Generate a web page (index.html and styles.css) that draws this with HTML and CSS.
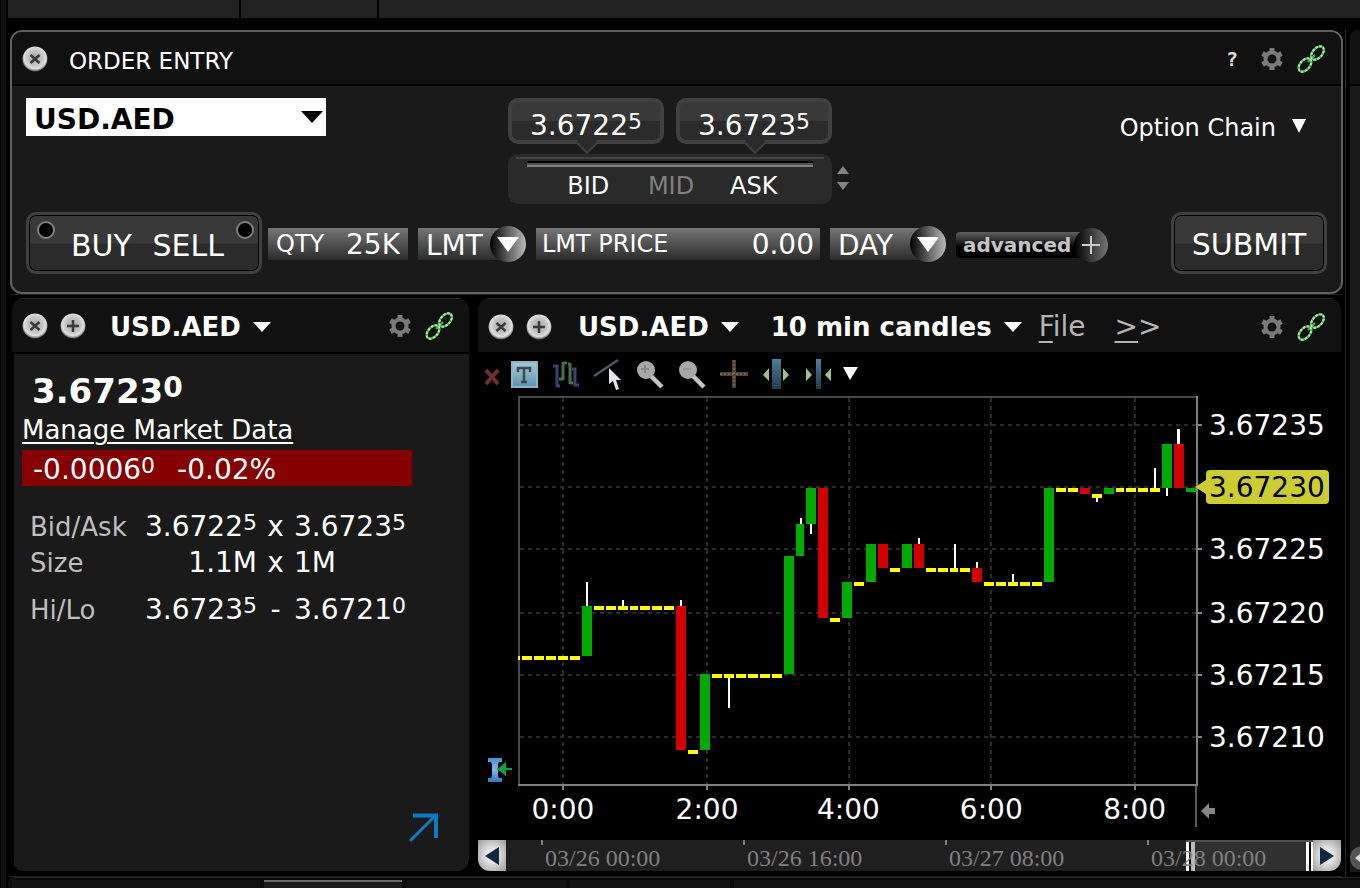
FILE: index.html
```html
<!DOCTYPE html>
<html lang="en">
<head>
<meta charset="utf-8">
<title>Order Entry - USD.AED</title>
<link rel="stylesheet" href="styles.css">
</head>
<body>
<svg class="defs" aria-hidden="true">
  <defs>
    <radialGradient id="knob" cx="50%" cy="45%" r="55%">
      <stop offset="0" stop-color="#a8a8a8"/><stop offset=".55" stop-color="#c4c4c4"/><stop offset=".8" stop-color="#e0e0e0"/><stop offset="1" stop-color="#505050"/>
    </radialGradient>
    <linearGradient id="tile" x1="0" y1="0" x2="0" y2="1"><stop offset="0" stop-color="#a9c9d6"/><stop offset="1" stop-color="#5c93ae"/></linearGradient>
    <linearGradient id="pipe" x1="0" y1="0" x2="0" y2="1"><stop offset="0" stop-color="#4d7f9c"/><stop offset="1" stop-color="#233a4a"/></linearGradient>
    <linearGradient id="beam" x1="0" y1="0" x2="0" y2="1"><stop offset="0" stop-color="#4a90d0"/><stop offset=".5" stop-color="#7db8ee"/><stop offset="1" stop-color="#2f78b8"/></linearGradient>
    <symbol id="i-close" viewBox="0 0 26 26"><circle cx="13" cy="13" r="12.5" fill="url(#knob)"/><path d="M8.500 9l9 8M17.500 9l-9 8" stroke="#3a3a3a" stroke-width="2.500"/></symbol>
    <symbol id="i-add" viewBox="0 0 26 26"><circle cx="13" cy="13" r="12.5" fill="url(#knob)"/><path d="M13 7v12M7 13h12" stroke="#3a3a3a" stroke-width="2.500"/></symbol>
    <symbol id="i-gear" viewBox="0 0 22 22"><g stroke="#7a7a7a"><path d="M11 0v22M1.500 5.500l19 11M20.500 5.500l-19 11" stroke-width="5"/></g><circle cx="11" cy="11" r="8.500" fill="#7a7a7a"/><circle cx="11" cy="11" r="4.500" fill="#111"/></symbol>
    <symbol id="i-link" viewBox="0 0 28 28"><g fill="none" stroke="#4fa457" stroke-width="2.400"><ellipse cx="20.500" cy="8" rx="7.800" ry="4.800" transform="rotate(-48 20.500 8)"/><ellipse cx="8" cy="20" rx="7.800" ry="4.800" transform="rotate(-48 8 20)"/><path d="M11 17l7-7"/></g><g fill="none" stroke="#a4f0a0" stroke-width="2" stroke-dasharray="2.500 1.500"><ellipse cx="20.500" cy="8" rx="7.800" ry="4.800" transform="rotate(-48 20.500 8)"/><ellipse cx="8" cy="20" rx="7.800" ry="4.800" transform="rotate(-48 8 20)"/></g></symbol>
    <symbol id="i-down" viewBox="0 0 20 10" preserveAspectRatio="none"><path d="M0 0h20L10 10z" fill="currentColor"/></symbol>
  </defs>
</svg>

<div class="app">
  <div class="rail"></div>
  <div class="main">
    <div class="topbar"><span></span><span></span><span></span></div>

    <div class="workspace">
      <div class="board">
        <section class="panel order">
          <header class="bar">
            <button class="icon" aria-label="Close"><svg width="26" height="26"><use href="#i-close"/></svg></button>
            <h1 class="order-title">ORDER ENTRY</h1>
            <span class="tools">
              <button class="icon help" aria-label="Help">?</button>
              <button class="icon" aria-label="Settings"><svg width="22" height="22"><use href="#i-gear"/></svg></button>
              <button class="icon" aria-label="Link"><svg width="28" height="28"><use href="#i-link"/></svg></button>
            </span>
          </header>
          <form class="order-body">
            <div class="quote-row">
              <div class="symbol">
                <select aria-label="Symbol"><option>USD.AED</option></select>
                <svg width="22" height="12"><use href="#i-down" width="22" height="12"/></svg>
              </div>
              <div class="quotes">
                <div class="prices">
                  <button type="button" class="price">3.6722<span class="pip">5</span></button>
                  <button type="button" class="price">3.6723<span class="pip">5</span></button>
                </div>
                <div class="sides">
                  <button type="button">BID</button>
                  <button type="button" class="dim">MID</button>
                  <button type="button">ASK</button>
                </div>
              </div>
              <div class="spin">
                <button type="button" aria-label="Up"><svg width="12" height="8"><path d="M6 0l6 8H0z" fill="#858585"/></svg></button>
                <button type="button" aria-label="Down"><svg width="12" height="8"><path d="M6 8l6-8H0z" fill="#858585"/></svg></button>
              </div>
              <button type="button" class="chain">Option Chain <svg width="14" height="14"><path d="M0 0h14L7 14z" fill="#fff"/></svg></button>
            </div>

            <div class="entry-row">
              <div class="side-switch">
                <label><input type="radio" name="side"><span>BUY</span></label>
                <label><span>SELL</span><input type="radio" name="side"></label>
              </div>
              <label class="field qty"><span>QTY</span><input type="text" value="25K"></label>
              <div class="field pick type"><select aria-label="Order type"><option>LMT</option></select><span class="ball"><svg width="22" height="15"><path d="M0 0h22L11 15z" fill="#fff"/></svg></span></div>
              <label class="field limit"><span>LMT PRICE</span><input type="text" value="0.00"></label>
              <div class="field pick tif"><select aria-label="Time in force"><option>DAY</option></select><span class="ball"><svg width="22" height="15"><path d="M0 0h22L11 15z" fill="#fff"/></svg></span></div>
              <button type="button" class="advanced"><span class="adv-text">advanced</span><span class="adv-ball"><svg width="18" height="18"><path d="M9 0v18M0 9h18" stroke="#ccc" stroke-width="2"/></svg></span></button>
              <button type="button" class="submit">SUBMIT</button>
            </div>
          </form>
        </section>

        <div class="lower">
          <section class="panel detail">
            <header class="bar">
              <button class="icon" aria-label="Close"><svg width="26" height="26"><use href="#i-close"/></svg></button>
              <button class="icon" aria-label="Add"><svg width="26" height="26"><use href="#i-add"/></svg></button>
              <button class="menu first">USD.AED <svg width="18" height="10"><use href="#i-down"/></svg></button>
              <span class="tools">
                <button class="icon" aria-label="Settings"><svg width="22" height="22"><use href="#i-gear"/></svg></button>
                <button class="icon" aria-label="Link"><svg width="28" height="28"><use href="#i-link"/></svg></button>
              </span>
            </header>
            <div class="detail-body">
              <p class="last">3.6723<span class="pip">0</span></p>
              <a class="manage" href="#">Manage Market Data</a>
              <p class="change"><span>-0.0006<span class="pip">0</span></span><span>-0.02%</span></p>
              <table class="stats">
                <tr><th>Bid/Ask</th><td>3.6722<span class="pip">5</span></td><td>x</td><td>3.6723<span class="pip">5</span></td></tr>
                <tr><th>Size</th><td>1.1M</td><td>x</td><td>1M</td></tr>
                <tr class="range"><th>Hi/Lo</th><td>3.6723<span class="pip">5</span></td><td>-</td><td>3.6721<span class="pip">0</span></td></tr>
              </table>
              <a class="expand" href="#" aria-label="Open details"><svg width="30" height="30" fill="none" stroke="#0a7cc4" stroke-width="3"><path d="M1 28L26 3"/><path d="M4 2.500h23V25" stroke-width="4"/></svg></a>
            </div>
          </section>

          <section class="panel chart">
            <header class="bar">
              <button class="icon" aria-label="Close"><svg width="26" height="26"><use href="#i-close"/></svg></button>
              <button class="icon" aria-label="Add"><svg width="26" height="26"><use href="#i-add"/></svg></button>
              <button class="menu first">USD.AED <svg width="18" height="10"><use href="#i-down"/></svg></button>
              <button class="menu period">10 min candles <svg width="18" height="10"><use href="#i-down"/></svg></button>
              <button class="file"><u>F</u>ile</button>
              <button class="file more"><u>&gt;</u>&gt;</button>
              <span class="tools">
                <button class="icon" aria-label="Settings"><svg width="22" height="22"><use href="#i-gear"/></svg></button>
                <button class="icon" aria-label="Link"><svg width="28" height="28"><use href="#i-link"/></svg></button>
              </span>
            </header>

            <div class="toolbar">
              <button class="icon" aria-label="Remove"><svg width="16" height="30"><path d="M2 11l12 14M14 11L2 25" stroke="#6e2f2f" stroke-width="4"/></svg></button>
              <button class="icon" aria-label="Text"><svg width="28" height="30"><rect x="2" y="3" width="25" height="25" fill="url(#tile)" stroke="#8db4c4" stroke-width="2"/><path d="M8 13V9h12v4M14 9v14M11 23h6" fill="none" stroke="#3c4a50" stroke-width="2.500"/></svg></button>
              <button class="icon" aria-label="Bars"><svg width="28" height="30" fill="none" stroke-width="3"><path d="M1 7h4v21M5 27h3M20 10h3v16h4" stroke="#3c4274"/><path d="M11 3v18M7 20h4M11 4h4M18 4v21M16 5h2M18 24h3" stroke="#47704f"/></svg></button>
              <button class="icon" aria-label="Trend line"><svg width="28" height="30"><path d="M0 17L24 1" stroke="#4a5a6a" stroke-width="2.500"/><path d="M15 9v16l4-3 3 9 3-1-3-9h5z" fill="#e4e4ee"/></svg></button>
              <button class="icon" aria-label="Zoom in"><svg width="28" height="30"><path d="M14 16l12 12" stroke="#c4c4c4" stroke-width="4.500"/><circle cx="10" cy="11" r="9" fill="#a8a8a8"/><path d="M9 6v8M5 10h8" stroke="#8a8a8a" stroke-width="2"/></svg></button>
              <button class="icon" aria-label="Zoom out"><svg width="28" height="30"><path d="M14 16l12 12" stroke="#c4c4c4" stroke-width="4.500"/><circle cx="10" cy="11" r="9" fill="#a8a8a8"/><path d="M5 10h8" stroke="#959595" stroke-width="2"/></svg></button>
              <button class="icon" aria-label="Crosshair"><svg width="28" height="30"><path d="M14 1v28M0 15h28" stroke="#4d4036" stroke-width="4"/><path d="M14 1v28M0 15h28" stroke="#77604e" stroke-width="2" stroke-dasharray="2 2"/></svg></button>
              <button class="icon" aria-label="Widen"><svg width="28" height="30"><rect x="10" y="0" width="9" height="30" fill="url(#pipe)"/><path d="M7 9v13l-6-6zM21 9v13l6-6z" fill="#9cc093"/></svg></button>
              <button class="icon" aria-label="Narrow"><svg width="28" height="30"><rect x="12" y="0" width="5" height="30" fill="url(#pipe)"/><path d="M2 9v13l6-6zM27 9v13l-6-6z" fill="#9cc093"/></svg></button>
              <button class="icon" aria-label="More tools"><svg width="16" height="30"><path d="M1 8h15L8 21z" fill="#fff"/></svg></button>
            </div>

            <div class="plot-row">
              <div class="gutter">
                <button class="icon" aria-label="Scale"><svg width="26" height="26"><path d="M1 1h14v4h-3l-1 2v12l1 2h3v4H1v-4h3l1-2V7L4 5H1z" fill="url(#beam)"/><path d="M10 12h15M12 12l6-5v10z" stroke="#0ba14c" stroke-width="2" fill="#0ba14c"/></svg></button>
              </div>
              <div class="plot">
                <svg viewBox="0 0 680 390" preserveAspectRatio="none" shape-rendering="crispEdges" role="img" aria-label="USD.AED 10 minute candles">
                  <g stroke="#2c2c2c" stroke-width="2" stroke-dasharray="4 4">
                    <path d="M2 29H678M2 91H678M2 153H678M2 217H678M2 279H678M2 341H678"/>
                    <path d="M45 2V388M189 2V388M331 2V388M473 2V388M617 2V388"/>
                  </g>
                  <path d="M1 390V1H679" fill="none" stroke="#484848" stroke-width="2"/>
                  <g class="up">
                    <path d="M64 210h10v50h-10zM182 278h10v76h-10zM266 160h10v118h-10zM278 128h8v32h-8zM288 92h10v36h-10zM324 186h10v36h-10zM348 148h10v38h-10zM384 148h10v24h-10zM526 92h10v94h-10zM586 92h10v6h-10zM644 48h10v44h-10zM668 92h10v4h-10z"/>
                  </g>
                  <g class="down">
                    <path d="M158 210h10v144h-10zM300 92h10v130h-10zM360 148h10v24h-10zM396 148h10v24h-10zM454 172h10v14h-10zM562 92h10v6h-10zM656 48h10v44h-10z"/>
                  </g>
                  <g class="flat">
                    <path d="M0 260h2v4h-2zM4 260h10v4h-10zM16 260h10v4h-10zM28 260h10v4h-10zM40 260h10v4h-10zM52 260h10v4h-10z"/>
                    <path d="M76 210h10v4h-10zM88 210h10v4h-10zM100 210h10v4h-10zM112 210h8v4h-8zM122 210h10v4h-10zM134 210h10v4h-10zM146 210h10v4h-10z"/>
                    <path d="M170 354h10v4h-10zM194 278h10v4h-10zM206 278h10v4h-10zM218 278h10v4h-10zM230 278h10v4h-10zM242 278h10v4h-10zM254 278h10v4h-10z"/>
                    <path d="M312 222h10v4h-10zM336 186h10v4h-10zM372 172h10v4h-10zM408 172h10v4h-10zM420 172h10v4h-10zM432 172h8v4h-8zM442 172h10v4h-10z"/>
                    <path d="M466 186h10v4h-10zM478 186h10v4h-10zM490 186h10v4h-10zM502 186h10v4h-10zM514 186h10v4h-10z"/>
                    <path d="M538 92h10v4h-10zM550 92h10v4h-10zM574 98h10v4h-10zM598 92h8v4h-8zM608 92h10v4h-10zM620 92h10v4h-10zM632 92h10v4h-10z"/>
                  </g>
                  <g class="wick">
                    <path d="M68 186h2v24h-2zM104 204h2v6h-2zM162 204h2v6h-2zM210 282h2v30h-2zM282 122h2v6h-2zM292 128h2v10h-2zM400 142h2v6h-2zM436 148h2v24h-2zM458 166h2v6h-2zM494 178h2v8h-2zM578 102h2v4h-2zM636 72h2v20h-2zM648 92h2v8h-2zM659 33h3v15h-3z"/>
                  </g>
                  <g fill="none" stroke="#808080" stroke-width="2">
                    <path d="M0 389H680M679 0V390"/>
                    <path d="M45 390v4M189 390v4M331 390v4M473 390v4M617 390v4"/>
                    <path d="M680 29h4M680 153h4M680 217h4M680 279h4M680 341h4"/>
                    <path d="M678 390v41" stroke="#5c5c5c"/>
                  </g>
                </svg>
                <span class="hour" style="left:6.600%">0:00</span>
                <span class="hour" style="left:27.800%">2:00</span>
                <span class="hour" style="left:48.600%">4:00</span>
                <span class="hour" style="left:69.600%">6:00</span>
                <span class="hour" style="left:90.700%">8:00</span>
              </div>
              <div class="scale">
                <span class="level" style="top:7.500%">3.67235</span>
                <span class="level current" style="top:23.300%"><svg width="11" height="14"><path d="M11 0v14L0 7z" fill="#cccc33"/></svg>3.67230</span>
                <span class="level" style="top:39.300%">3.67225</span>
                <span class="level" style="top:55.700%">3.67220</span>
                <span class="level" style="top:71.600%">3.67215</span>
                <span class="level" style="top:87.500%">3.67210</span>
              </div>
            </div>
            <div class="hours">
              <button class="icon" aria-label="Latest"><svg width="14" height="18"><path d="M0 9l8-8v5h6v6H8v5z" fill="#858585"/></svg></button>
            </div>

            <div class="scroller">
              <button class="step left" aria-label="Earlier"><svg width="14" height="18"><path d="M14 0v18L0 9z" fill="#10283e"/></svg></button>
              <div class="track">
                <div class="window"></div>
                <span>03/26 00:00</span><span>03/26 16:00</span><span>03/27 08:00</span><span>03/28 00:00</span>
              </div>
              <button class="step right" aria-label="Later"><svg width="14" height="18"><path d="M0 0v18l14-9z" fill="#10283e"/></svg></button>
            </div>
          </section>
        </div>
      </div>

      <aside class="next">
        <div class="next-head"></div>
        <svg class="next-knob" width="10" height="24"><circle cx="12" cy="12" r="12" fill="#555"/><path d="M5 12l5-4v8z" fill="#ddd"/></svg>
      </aside>
    </div>

    <footer class="tabs"><span></span><span class="on"></span><span></span><span></span><span></span></footer>
  </div>
</div>
</body>
</html>
```

FILE: styles.css
```css
* { box-sizing: border-box; }

body {
  margin: 0;
  background: #000;
  color: #fff;
  font-family: "DejaVu Sans", Verdana, sans-serif;
  font-size: 28px;
  line-height: 36px;
}

button, input, select {
  margin: 0;
  padding: 0;
  border: 0;
  background: none;
  color: inherit;
  font: inherit;
  line-height: inherit;
  appearance: none;
}

svg { display: block; overflow: visible; }
p, h1 { margin: 0; }
.defs { position: absolute; width: 0; height: 0; }
.pip { font-size: 22px; line-height: 20px; vertical-align: 6px; }

/* frame */
.app { display: flex; height: 100vh; min-height: 888px; overflow: hidden; }
.rail { flex: 0 0 8px; background: #111; border-left: 1px solid #000; border-right: 2px solid #000; }
.main { flex: 1; min-width: 0; display: flex; flex-direction: column; }
.topbar { display: flex; gap: 2px; height: 18px; margin-bottom: 12px; }
.topbar span { background: #212121; }
.topbar span:nth-child(1) { width: 231px; }
.topbar span:nth-child(2) { width: 136px; }
.topbar span:nth-child(3) { flex: 1; }
.workspace { flex: 1; display: flex; min-height: 0; }
.board { flex: 1; min-width: 0; display: flex; flex-direction: column; padding-left: 2px; padding-right: 2px; border-right: 1px solid #2a2a2a; }
.next { flex: 0 0 10px; margin: 0 0 5px 4px; background: #1a1a1a; display: flex; flex-direction: column; justify-content: space-between; border-top-left-radius: 8px; overflow: hidden; }
.next-head { height: 56px; background: #111; border-bottom: 2px solid #000; }
.next-knob { margin-bottom: 2px; }

/* panels */
.panel { background: #1a1a1a; border-radius: 12px; overflow: hidden; }
.bar { display: flex; align-items: center; height: 56px; background: #111; border-bottom: 2px solid #000; }
.icon { flex: none; display: block; }
.tools { margin-left: auto; display: flex; align-items: center; gap: 14px; }
.menu { display: flex; align-items: center; gap: 12px; font-size: 26px; font-weight: bold; white-space: nowrap; }

.order { border: 2px solid #606060; height: 264px; }
.order > .bar { height: 54px; padding: 2px 16px 0 10px; }
.order-title { margin-left: 21px; padding-top: 3px; font-size: 23px; font-weight: normal; }
.help { width: 12px; margin-right: 9px; font: bold 20px/22px "DejaVu Sans Mono", monospace; color: #ddd; }

.order-body { padding: 12px 14px 0; }
.quote-row { display: flex; align-items: flex-start; height: 106px; }
.symbol { position: relative; flex: none; width: 300px; margin-right: 182px; background: #fff; color: #000; }
.symbol select { display: block; width: 100%; height: 38px; padding: 4px 0 0 8px; font-weight: bold; }
.symbol svg { position: absolute; right: 3px; top: 13px; pointer-events: none; }
.quotes { flex: none; width: 324px; }
.prices { display: flex; gap: 12px; }
.price {
  position: relative;
  flex: 1;
  height: 46px;
  padding-top: 6px;
  border: 4px solid #404040;
  border-radius: 10px;
  background: linear-gradient(#393939 50%, #2b2b2b 50%);
  white-space: nowrap;
}
.price::after {
  content: "";
  position: absolute;
  left: 50%;
  bottom: -11px;
  width: 14px;
  height: 14px;
  margin-left: -7px;
  background: #2b2b2b;
  border: solid #404040;
  border-width: 0 2px 2px 0;
  transform: rotate(45deg);
}
.sides {
  display: flex;
  height: 50px;
  margin-top: 10px;
  padding: 7px 19px 0;
  border-radius: 10px;
  background: #2a2a2a linear-gradient(#444, #444) 50% 3px / 308px 2px no-repeat;
  font-size: 24px;
}
.sides button { flex: 1; height: 43px; padding-top: 6px; background: linear-gradient(#000 0 2px, #505050 2px 4px, #808080 4px 6px, transparent 6px); }
.sides button:first-child { padding-left: 20px; }
.sides button:last-child { padding-right: 18px; }
.sides .dim { color: #808080; }
.spin { display: flex; flex-direction: column; gap: 8px; margin: 68px 0 0 5px; }
.spin button { display: block; }
.chain { display: flex; align-items: center; gap: 16px; margin: 12px 21px 0 auto; font-size: 24px; white-space: nowrap; }
.chain svg { margin-top: -4px; }

.entry-row { display: flex; align-items: center; gap: 10px; margin-top: 8px; height: 62px; }
.side-switch, .submit {
  flex: none;
  height: 62px;
  border: 3px solid #404040;
  border-radius: 10px;
  background: linear-gradient(#393939 50%, #2b2b2b 52%);
  box-shadow: inset 0 0 0 1px #000;
  font-size: 30px;
}
.side-switch { display: flex; justify-content: space-between; width: 236px; margin-right: -4px; padding: 6px 5px 0 8px; }
.side-switch label { display: flex; align-items: flex-start; gap: 12px; }
.side-switch span { padding-top: 7px; line-height: 36px; }
.side-switch label:first-child { gap: 16px; }
.side-switch input { width: 18px; height: 18px; border: 2px solid #808080; border-radius: 9px; background: #000; }
.submit { width: 156px; margin-left: auto; padding-top: 4px; }
.field { display: flex; align-items: center; height: 32px; margin-top: 2px; background: linear-gradient(#757575, #2c2c2c); }
.field input { min-width: 0; flex: 1; width: 0; height: 32px; padding-top: 2px; text-align: right; }
.field select { flex: 1; min-width: 0; height: 32px; padding: 0 0 2px 8px; }
.field > span:first-child { font-size: 24px; white-space: nowrap; }
.qty { width: 140px; padding: 0 8px; }
.limit { flex: 0 1 284px; padding: 0 6px; }
.type { width: 108px; }
.tif { width: 116px; }
.pick { position: relative; background-size: calc(100% - 18px) 100%; background-repeat: no-repeat; }
.ball { position: absolute; right: 0; top: -2px; display: flex; align-items: center; justify-content: center; width: 36px; height: 36px; border-radius: 18px; background: linear-gradient(90deg, #000, #bbb); pointer-events: none; }
.advanced { display: flex; align-items: center; width: 152px; height: 36px; margin-top: 4px; }
.adv-text { height: 26px; width: 128px; padding-left: 7px; border-radius: 4px; background: linear-gradient(#606060, #000 60%); color: #c4c4c4; font-size: 20px; font-weight: bold; line-height: 26px; text-align: left; }
.adv-ball { display: flex; align-items: center; justify-content: center; width: 34px; height: 34px; margin-left: -10px; border-radius: 17px; background: linear-gradient(90deg, #000, #757575); }

/* lower row */
.lower { flex: 1; display: flex; min-height: 0; padding: 3px 2px 5px; border-top: 1px solid #222; border-bottom: 1px solid #222; }
.detail { flex: 0 0 457px; display: flex; flex-direction: column; }
.lower .bar { padding: 0 16px 0 10px; border-top: 1px solid #262626; }
.lower .bar .icon + .icon { margin-left: 12px; }
.lower .tools .icon + .icon { margin-left: 0; }
.menu.first { margin-left: 24px; padding-top: 3px; }
.menu svg { margin-top: -1px; }
.detail-body { flex: 1; display: flex; flex-direction: column; align-items: flex-start; padding: 15px 30px 28px 8px; border-left: 2px solid #000; }
.last { padding-left: 10px; font-size: 34px; font-weight: bold; line-height: 44px; }
.last .pip { font-size: 28px; }
.manage { color: #fff; font-size: 26px; line-height: 34px; text-decoration-thickness: 2px; text-underline-offset: 3px; }
.change { display: flex; gap: 22px; width: 390px; height: 36px; margin-top: 3px; padding: 2px 11px 0; background: #850000; }
.stats { margin-top: 23px; margin-left: 8px; border-collapse: collapse; }
.stats th, .stats td { padding: 0; height: 36px; line-height: 34px; white-space: nowrap; }
.stats th { width: 110px; color: #bdbdbd; font-size: 26px; font-weight: normal; text-align: left; }
.stats td:nth-child(2) { width: 117px; text-align: right; }
.stats td:nth-child(3) { width: 37px; text-align: center; }
.stats .range th, .stats .range td { padding-top: 12px; }
.expand { margin: auto 0 0 auto; }

.chart { flex: 1; min-width: 0; margin-left: 9px; display: flex; flex-direction: column; background: #000; }
.chart .bar { height: 54px; padding-top: 3px; border-bottom: 0; }
.chart .menu.first { padding-top: 0; margin-left: 26px; }
.menu.period { margin-left: 32px; }
.file { margin-left: 17px; color: #b4b4b4; }
.file u { text-decoration-thickness: 2px; text-underline-offset: 5px; }
.file.more { margin-left: 29px; }
.toolbar { display: flex; align-items: center; gap: 14px; height: 44px; padding-left: 6px; }
.toolbar .icon:nth-child(2) { margin-left: -4px; }
.toolbar .icon:last-child { margin-left: -4px; }
.plot-row { flex: 1; display: flex; min-height: 0; }
.gutter { flex: 0 0 40px; display: flex; align-items: flex-end; padding: 0 0 3px 9px; }
.plot { position: relative; flex: 1; min-width: 0; }
.plot svg { width: 100%; height: 100%; }
.up { fill: #00aa00; }
.down { fill: #d40000; }
.flat { fill: #ffff00; }
.wick { fill: #fff; }
.hour { position: absolute; top: 100%; padding-top: 6px; transform: translateX(-50%); }
.scale { position: relative; flex: 0 0 143px; }
.level { position: absolute; left: 8px; height: 34px; margin-top: -17px; padding: 0 4px 0 3px; line-height: 36px; }
.level.current { border-radius: 4px; background: #cccc33; color: #000; }
.current svg { position: absolute; left: -11px; top: 10px; }
.hours { display: flex; justify-content: flex-end; align-items: center; height: 54px; padding: 0 126px 4px 0; }

.scroller { display: flex; height: 31px; background: #1f1f1f; }
.step { flex: 0 0 28px; display: flex; align-items: center; justify-content: center; background: radial-gradient(#e6e6e6 30%, #999); }
.track { position: relative; flex: 1; min-width: 0; display: flex; padding-left: 35px; font-family: "Liberation Serif", "Times New Roman", serif; font-size: 24px; color: #808080; }
.track span { position: relative; flex: 0 0 202px; padding-left: 4px; line-height: 36px; white-space: nowrap; background: linear-gradient(#808080, #808080) 0 0 / 2px 5px no-repeat; }
.track span:last-child { flex: 0 0 120px; }
.window { position: absolute; right: 0; top: 0; bottom: 0; width: 127px; background: #303030; border-top: 2px solid #505050; box-shadow: inset 3px 0 #fff, inset 5px 0 #000, inset 9px 0 #bbb, inset -2px 0 #fff, inset -4px 0 #000, inset -7px 0 #fff; }

/* bottom tabs */
.tabs { display: flex; gap: 4px; height: 11px; padding: 2px 0 0 4px; border-top: 1px solid #262626; background: #0a0a0a; border-top-left-radius: 8px; }
.tabs span { width: 160px; background: #131313; }
.tabs span:first-child { width: 248px; }
.tabs span:last-child { flex: 1; }
.tabs .on { width: 138px; border-top: 2px solid #6a6a6a; background: #1a1a1a; }
```
